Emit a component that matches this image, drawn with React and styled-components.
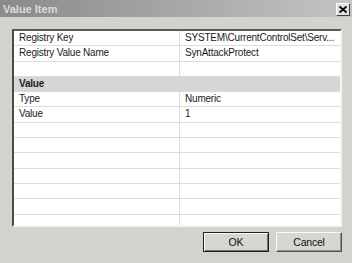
import React from 'react';
import styled, { createGlobalStyle } from 'styled-components';

const Global = createGlobalStyle`
  html, body { margin: 0; padding: 0; background: #d4d2cd; }
  body { font-family: "Liberation Sans", Arial, sans-serif; }
`;

const Window = styled.div`
  width: 352px;
  height: 263px;
  background: #d4d2cd;
  display: flex;
  flex-direction: column;
  overflow: hidden;
`;

const TitleBar = styled.div`
  height: 17px;
  display: flex;
  align-items: center;
  justify-content: space-between;
  padding: 0 2px 0 3px;
  background: linear-gradient(to right, #8a8a8a 0%, #a4a4a4 45%, #c4c4c4 100%);
`;

const Title = styled.span`
  color: #dcdcdc;
  font-weight: bold;
  font-size: 11px;
`;

const CloseButton = styled.div`
  width: 14px;
  height: 13px;
  box-sizing: border-box;
  background: #e2e0dc;
  border: 1px solid;
  border-color: #ffffff #404040 #404040 #ffffff;
  display: flex;
  align-items: center;
  justify-content: center;
  margin-top: 2px;
`;

const Body = styled.div`
  flex: 1;
  padding: 12px 10px 0 12px;
  display: flex;
  flex-direction: column;
`;

const Grid = styled.div`
  height: 198px;
  box-sizing: border-box;
  background: #fff;
  border: 2px solid;
  border-color: #5a5a5a #f4f4f4 #f4f4f4 #4a4a4a;
  overflow: hidden;
`;

const Row = styled.div`
  display: grid;
  grid-template-columns: 166px 1fr;
  height: 15.3px;
  box-sizing: border-box;
  border-bottom: 1px solid #dcdcdc;
  background: ${(p) => (p.$header ? '#d6d6d6' : '#fff')};
  font-size: 10px;
  letter-spacing: -0.2px;
  color: #1a1a1a;
`;

const Cell = styled.div`
  padding-left: 5px;
  line-height: 14px;
  white-space: nowrap;
  overflow: hidden;
  font-weight: ${(p) => (p.$bold ? 'bold' : 'normal')};
  border-right: ${(p) => (p.$split ? '1px solid #dcdcdc' : 'none')};
`;

const ButtonRow = styled.div`
  display: flex;
  justify-content: flex-end;
  gap: 7px;
  margin-top: 5px;
`;

const Button = styled.button`
  width: 66px;
  height: 20px;
  box-sizing: border-box;
  padding: 0;
  font-family: "Liberation Sans", Arial, sans-serif;
  font-size: 10.5px;
  letter-spacing: -0.2px;
  color: #111;
  background: #d8d6d2;
  border: 1px solid;
  border-color: ${(p) =>
    p.$default ? '#202020' : '#fafafa #505050 #505050 #fafafa'};
  box-shadow: ${(p) =>
    p.$default
      ? 'inset 1px 1px 0 #fafafa, inset -1px -1px 0 #707070'
      : 'inset -1px -1px 0 #909090'};
`;

const rows = [
  ['Registry Key', 'SYSTEM\\CurrentControlSet\\Serv...'],
  ['Registry Value Name', 'SynAttackProtect'],
  ['', ''],
  ['Value', null],
  ['Type', 'Numeric'],
  ['Value', '1'],
  ['', ''],
  ['', ''],
  ['', ''],
  ['', ''],
  ['', ''],
  ['', ''],
  ['', ''],
];

export default function App() {
  return (
    <Window>
      <Global />
      <TitleBar>
        <Title>Value Item</Title>
        <CloseButton>
          <svg width="8" height="7" viewBox="0 0 8 7">
            <path d="M0.5 0.5 L7.5 6.5 M7.5 0.5 L0.5 6.5" stroke="#000" strokeWidth="1.8" />
          </svg>
        </CloseButton>
      </TitleBar>
      <Body>
        <Grid>
          {rows.map(([name, value], i) =>
            value === null ? (
              <Row key={i} $header>
                <Cell $bold>{name}</Cell>
                <Cell />
              </Row>
            ) : (
              <Row key={i}>
                <Cell $split>{name}</Cell>
                <Cell>{value}</Cell>
              </Row>
            )
          )}
        </Grid>
        <ButtonRow>
          <Button $default>OK</Button>
          <Button>Cancel</Button>
        </ButtonRow>
      </Body>
    </Window>
  );
}
